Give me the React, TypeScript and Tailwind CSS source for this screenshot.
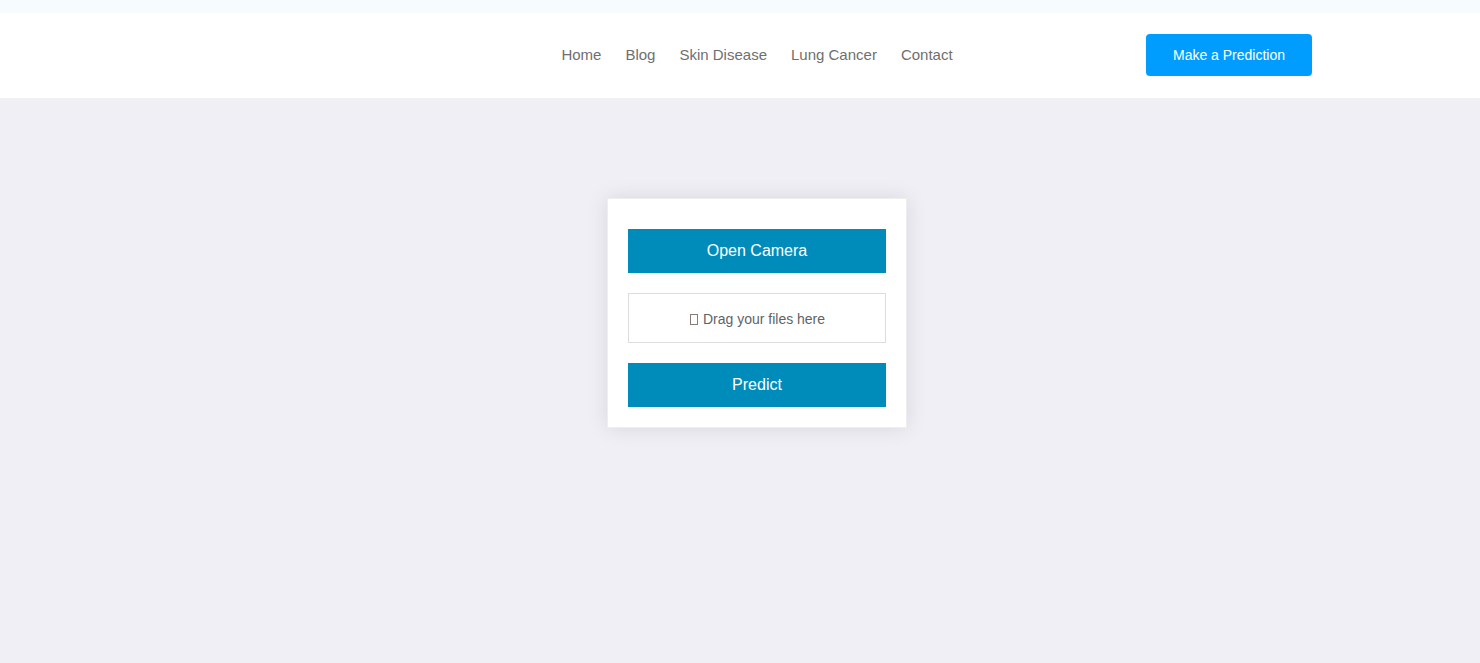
const links = ["Home", "Blog", "Skin Disease", "Lung Cancer", "Contact"];

export default function App() {
  return (
    <div className="flex min-h-screen flex-col bg-[#f0eff5] font-['Liberation_Sans',Arial,sans-serif]">
      <div className="h-[13px] bg-[#f6fbff]" />
      <header className="grid grid-cols-[1fr_auto_1fr] items-center bg-white pt-[21px] pr-[168px] pb-[22px] pl-[202px]">
        <span />
        <nav className="flex gap-6 text-[15px] leading-6 text-[#6f6f6f]">
          {links.map((label) => (
            <a key={label} href="#">
              {label}
            </a>
          ))}
        </nav>
        <button
          type="button"
          className="h-[42px] w-[166px] justify-self-end rounded bg-[#009dff] text-sm text-white"
        >
          Make a Prediction
        </button>
      </header>
      <main className="flex flex-1 items-start justify-center pt-[100px] pl-[34px]">
        <form className="flex w-[300px] flex-col gap-5 border border-[#eeeeee] bg-white px-5 pt-[30px] pb-5 shadow-[0_0_20px_rgba(0,0,0,0.1)]">
          <button type="button" className="h-11 bg-[#008cba] text-base text-white">
            Open Camera
          </button>
          <label className="flex h-[50px] cursor-pointer items-center justify-center gap-1 border border-[#dddddd] pt-0.5 text-sm text-[#5f6368]">
            <svg className="h-[11px] w-[10px]" viewBox="0 0 10 11" fill="none" stroke="#8a7a78" aria-hidden="true">
              <rect x="1.5" y="0.5" width="7" height="10" />
            </svg>
            Drag your files here
            <input type="file" className="sr-only" />
          </label>
          <button type="button" className="h-11 bg-[#008cba] text-base text-white">
            Predict
          </button>
        </form>
      </main>
    </div>
  );
}
